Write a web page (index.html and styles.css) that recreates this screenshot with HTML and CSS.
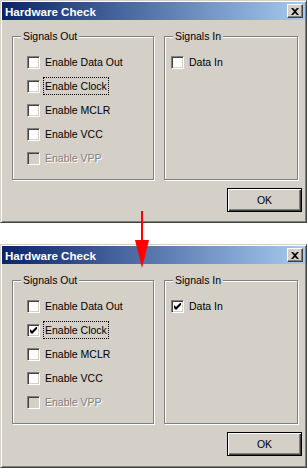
FILE: index.html
```html
<!doctype html>
<html lang="en">
  <head>
    <meta charset="utf-8">
    <meta name="viewport" content="width=device-width, initial-scale=1">
    <title>Hardware Check</title>
    <link rel="stylesheet" href="styles.css">
  </head>
  <body>
    <!-- Before -->
    <div class="window">
      <div class="titlebar">
        <span class="title">Hardware Check</span>
        <span class="close-btn">
          <svg width="8" height="7" viewBox="0 0 8 7"><path d="M0 0h2l2 2 2-2h2L5 3.5 8 7H6L4 5 2 7H0l3-3.5z" fill="#000"/></svg>
        </span>
      </div>
      <div class="content">
        <div class="group group-out">
          <span class="group-label">Signals Out</span>
          <div class="row"><span class="check"></span><span class="label">Enable Data Out</span></div>
          <div class="row"><span class="check"></span><span class="label focus">Enable Clock</span></div>
          <div class="row"><span class="check"></span><span class="label">Enable MCLR</span></div>
          <div class="row"><span class="check"></span><span class="label">Enable VCC</span></div>
          <div class="row disabled"><span class="check"></span><span class="label">Enable VPP</span></div>
        </div>
        <div class="group group-in">
          <span class="group-label">Signals In</span>
          <div class="row"><span class="check"></span><span class="label">Data In</span></div>
        </div>
      </div>
      <div class="footer">
        <button class="btn-default">OK</button>
      </div>
    </div>

    <!-- After -->
    <div class="window window-after">
      <div class="titlebar">
        <span class="title">Hardware Check</span>
        <span class="close-btn">
          <svg width="8" height="7" viewBox="0 0 8 7"><path d="M0 0h2l2 2 2-2h2L5 3.5 8 7H6L4 5 2 7H0l3-3.5z" fill="#000"/></svg>
        </span>
      </div>
      <div class="content">
        <div class="group group-out">
          <span class="group-label">Signals Out</span>
          <div class="row"><span class="check"></span><span class="label">Enable Data Out</span></div>
          <div class="row"><span class="check checked"><svg width="7" height="7" viewBox="0 0 7 7"><polygon points="0,2 2,4 7,-1 7,2 2,7 0,5" fill="#000"/></svg></span><span class="label focus">Enable Clock</span></div>
          <div class="row"><span class="check"></span><span class="label">Enable MCLR</span></div>
          <div class="row"><span class="check"></span><span class="label">Enable VCC</span></div>
          <div class="row disabled"><span class="check"></span><span class="label">Enable VPP</span></div>
        </div>
        <div class="group group-in">
          <span class="group-label">Signals In</span>
          <div class="row"><span class="check checked"><svg width="7" height="7" viewBox="0 0 7 7"><polygon points="0,2 2,4 7,-1 7,2 2,7 0,5" fill="#000"/></svg></span><span class="label">Data In</span></div>
        </div>
      </div>
      <div class="footer">
        <button class="btn-default">OK</button>
      </div>
    </div>

    <!-- Arrow between the two states -->
    <svg class="arrow" width="18" height="60" viewBox="0 0 18 60">
      <rect x="7" y="0" width="2" height="32" fill="#ff0000"/>
      <polygon points="1,29 15,29 8,57" fill="#ff0000"/>
    </svg>
  </body>
</html>
```

FILE: styles.css
```css
/* Reset */
* {
  margin: 0;
  padding: 0;
  box-sizing: border-box;
}

body {
  position: relative;
  width: 307px;
  height: 468px;
  overflow: hidden;
  background-color: #fff;
  font-family: "Liberation Sans", Arial, sans-serif;
  font-size: 10.5px;
  color: #000;
}

/* Window frame */
.window {
  height: 223px;
  padding: 1px;
  background-color: #d4d0c8;
  border: 1px solid;
  border-color: #d4d0c8 #404040 #404040 #d4d0c8;
  box-shadow: inset 1px 1px 0 #fff, inset -1px -1px 0 #808080;
}

.window-after {
  height: 224px;
  margin-top: 21px;
}

/* Title bar */
.titlebar {
  height: 18px;
  display: flex;
  align-items: center;
  justify-content: space-between;
  padding: 0 2px 0 3px;
  background: linear-gradient(to right, #0a246a, #a6caf0);
}

.title {
  color: #fff;
  font-weight: bold;
  font-size: 11.6px;
}

.close-btn {
  width: 16px;
  height: 14px;
  display: flex;
  align-items: center;
  justify-content: center;
  background-color: #d4d0c8;
  border: 1px solid;
  border-color: #fff #404040 #404040 #fff;
  box-shadow: inset -1px -1px 0 #808080;
}

/* Group boxes */
.content {
  display: flex;
  gap: 10px;
  padding: 16px 0 0 10px;
}

.group {
  position: relative;
  height: 144px;
  display: flex;
  flex-direction: column;
  gap: 6px;
  padding-top: 16px;
  border: 1px solid #808080;
  box-shadow: inset 1px 1px 0 #fff, 1px 1px 0 #fff;
}

.group-out {
  width: 142px;
  padding-left: 14px;
}

.group-in {
  width: 134px;
  padding-left: 6px;
}

.group-label {
  position: absolute;
  top: -7px;
  left: 8px;
  padding: 0 2px;
  line-height: 13px;
  background-color: #d4d0c8;
}

/* Checkbox rows */
.row {
  display: flex;
  align-items: center;
  height: 18px;
}

.check {
  width: 13px;
  height: 13px;
  flex-shrink: 0;
  margin-right: 3px;
  display: flex;
  align-items: center;
  justify-content: center;
  background-color: #fff;
  border: 1px solid;
  border-color: #808080 #fff #fff #808080;
  box-shadow: inset 1px 1px 0 #404040, inset -1px -1px 0 #d4d0c8;
}

.label {
  padding: 0 1px;
  line-height: 16px;
  border: 1px solid transparent;
}

.label.focus {
  border: 1px dotted #000;
}

.disabled .check {
  background-color: #d4d0c8;
}

.disabled .label {
  color: #808080;
  text-shadow: 1px 1px 0 #fff;
}

/* Button */
.footer {
  display: flex;
  justify-content: flex-end;
  padding: 8px 3px 0 0;
}

.btn-default {
  width: 75px;
  height: 24px;
  background-color: #d4d0c8;
  border: 1px solid #000;
  box-shadow: inset 1px 1px 0 #fff, inset -1px -1px 0 #404040, inset -2px -2px 0 #808080;
  font-family: inherit;
  font-size: 10.5px;
  color: #000;
}

/* Red arrow overlay */
.arrow {
  position: absolute;
  left: 134px;
  top: 211px;
}
```
